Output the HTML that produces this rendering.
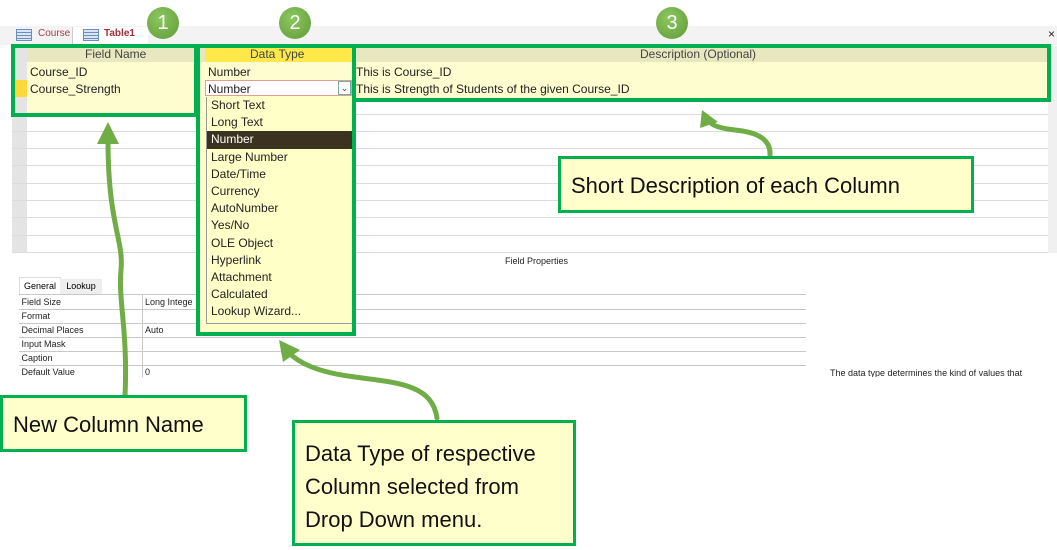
<!DOCTYPE html>
<html><head><meta charset="utf-8"><style>
body{margin:0;width:1057px;height:550px;position:relative;overflow:hidden;background:#fff;font-family:"Liberation Sans",sans-serif}
.a{position:absolute}
.t{font-size:12px;color:#222;white-space:nowrap}
.row{position:absolute;left:12px;width:1036px;height:1px;background:#dcdcdc}
.dd div{height:17.2px;line-height:17px;padding-left:4px;font-size:12px;color:#222}
.box{position:absolute;border:4px solid #00b050;box-sizing:border-box}
.call{position:absolute;border:3px solid #00b050;background:#ffffcc;box-sizing:border-box;font-size:22px;color:#111}
.circ{position:absolute;width:32px;height:32px;border-radius:50%;background:radial-gradient(circle at 40% 35%,#8cc65f,#5f9b38);color:#fff;font-size:20px;text-align:center;line-height:32px}
.fp{position:absolute;left:19px;width:787px;height:14px;border-bottom:1px solid #c8c8c8;font-size:9px;line-height:14px;color:#222}
</style></head><body>
<!-- field properties (drawn first, underneath) -->
<div class="a t" style="left:505px;top:256px;font-size:9px">Field Properties</div>
<div class="a" style="left:19px;top:277px;width:40px;height:17px;background:#fff;border:1px solid #ddd;border-bottom:none;font-size:9px;line-height:16px;text-align:center">General</div>
<div class="a" style="left:60px;top:279px;width:42px;height:15px;background:#eee;font-size:9px;line-height:15px;text-align:center">Lookup</div>
<div class="a" style="left:19px;top:294px;width:787px;height:84px;border-top:1px solid #c8c8c8"></div>
<div class="a" style="left:142px;top:295px;width:1px;height:83px;background:#c8c8c8"></div>
<div class="fp" style="top:295px">&nbsp;Field Size<span class="a" style="left:126px">Long Intege</span></div>
<div class="fp" style="top:309px">&nbsp;Format</div>
<div class="fp" style="top:323px">&nbsp;Decimal Places<span class="a" style="left:126px">Auto</span></div>
<div class="fp" style="top:337px">&nbsp;Input Mask</div>
<div class="fp" style="top:351px">&nbsp;Caption</div>
<div class="fp" style="top:365px;border:none">&nbsp;Default Value<span class="a" style="left:126px">0</span></div>
<div class="a t" style="left:830px;top:368px;font-size:9px">The data type determines the kind of values that</div>
<div class="a" style="left:0;top:377px;width:1057px;height:173px;background:#fff"></div>
<!-- tab bar -->
<div class="a" style="left:0;top:26px;width:1057px;height:19px;background:#f3f3f3"></div>
<div class="a" style="left:16px;top:29px;width:14px;height:10px;border:1px solid #6a8fbf;background:repeating-linear-gradient(#dbe6f5 0 2px,#6a8fbf 2px 3px)"></div>
<div class="a t" style="left:38px;top:28px;font-size:10px;color:#a0404a">Course</div>
<div class="a" style="left:72px;top:27px;width:75px;height:18px;background:#fff;border-left:1px solid #ccc"></div>
<div class="a" style="left:83px;top:29px;width:14px;height:10px;border:1px solid #6a8fbf;background:repeating-linear-gradient(#dbe6f5 0 2px,#6a8fbf 2px 3px)"></div>
<div class="a t" style="left:104px;top:28px;font-size:10px;color:#a0303a;font-weight:bold">Table1</div>
<div class="a t" style="left:1048px;top:27px;font-size:12px">×</div>
<!-- grid -->
<div class="a" style="left:12px;top:46px;width:1036px;height:207px;background:#fff"></div>
<div class="a" style="left:12px;top:46px;width:1036px;height:54px;background:#fdfdd0"></div>
<div class="a" style="left:12px;top:46px;width:186px;height:70px;background:#fdfdd0"></div>
<div class="a" style="left:12px;top:46px;width:1036px;height:16px;background:#e8e8c0"></div>
<div class="a" style="left:205px;top:46px;width:147px;height:16px;background:#ffe94a"></div>
<div class="a" style="left:12px;top:46px;width:15px;height:207px;background:#e4e4e4"></div>
<div class="a" style="left:12px;top:80px;width:15px;height:17px;background:#ffd83a"></div>
<div class="row" style="top:114px"></div><div class="row" style="top:131px"></div><div class="row" style="top:148px"></div><div class="row" style="top:165px"></div><div class="row" style="top:183px"></div><div class="row" style="top:200px"></div><div class="row" style="top:217px"></div><div class="row" style="top:235px"></div><div class="row" style="top:252px"></div>
<div class="a" style="left:1048px;top:46px;width:9px;height:207px;background:#f0f0f0"></div>
<div class="a t" style="left:85px;top:47px;color:#444">Field Name</div>
<div class="a t" style="left:250px;top:47px;color:#444">Data Type</div>
<div class="a t" style="left:640px;top:47px;color:#444">Description (Optional)</div>
<div class="a t" style="left:30px;top:65px">Course_ID</div>
<div class="a t" style="left:30px;top:82px">Course_Strength</div>
<div class="a t" style="left:208px;top:65px">Number</div>
<div class="a" style="left:205px;top:80px;width:147px;height:16px;border:1px solid #e0a090;background:#fff;box-sizing:border-box"></div>
<div class="a t" style="left:208px;top:82px">Number</div>
<div class="a" style="left:338px;top:81px;width:13px;height:14px;border:1px solid #7aa;box-sizing:border-box;font-size:9px;text-align:center;line-height:12px;color:#444">⌄</div>
<div class="a t" style="left:356px;top:65px">This is Course_ID</div>
<div class="a t" style="left:356px;top:82px">This is Strength of Students of the given Course_ID</div>
<!-- dropdown -->
<div class="a" style="left:198px;top:96px;width:156px;height:238px;background:#ffffc8"></div>
<div class="a dd" style="left:206px;top:97px;width:146px;height:226px;background:#ffffc8;border-left:1px solid #999;border-bottom:1px solid #999">
<div>Short Text</div><div>Long Text</div><div style="background:#3b3320;color:#fff">Number</div><div>Large Number</div><div>Date/Time</div><div>Currency</div><div>AutoNumber</div><div>Yes/No</div><div>OLE Object</div><div>Hyperlink</div><div>Attachment</div><div>Calculated</div><div>Lookup Wizard...</div></div>
<!-- boxes -->
<div class="box" style="left:11px;top:44px;width:187px;height:73px"></div>
<div class="box" style="left:196px;top:44px;width:160px;height:292px"></div>
<div class="box" style="left:352px;top:44px;width:699px;height:58px"></div>
<div class="circ" style="left:147px;top:7px">1</div>
<div class="circ" style="left:279px;top:7px">2</div>
<div class="circ" style="left:656px;top:7px">3</div>
<!-- arrows -->
<svg class="a" style="left:0;top:0" width="1057" height="550">
<g fill="none" stroke="#70ad47" stroke-width="5" stroke-linecap="round">
<path d="M125,396 C128,330 118,300 121,270 C124,240 108,225 108,140"/>
<path d="M437,418 C432,385 400,383 355,377 C315,372 298,362 288,352"/>
<path d="M770,155 C771,138 755,132 735,130 C718,128 712,125 710,122"/>
</g>
<g fill="#70ad47"><polygon points="108,122 97,144 119,144"/><polygon points="279,340 283,362 300,350"/><polygon points="702,110 700,128 718,122"/></g>
</svg>
<div class="call" style="left:558px;top:156px;width:416px;height:57px;padding:14px 0 0 10px">Short Description of each Column</div>
<div class="call" style="left:0;top:395px;width:247px;height:57px;padding:14px 0 0 10px">New Column Name</div>
<div class="call" style="left:292px;top:420px;width:284px;height:126px;padding:14px 0 0 10px;line-height:33px">Data Type of respective<br>Column selected from<br>Drop Down menu.</div>
</body></html>
